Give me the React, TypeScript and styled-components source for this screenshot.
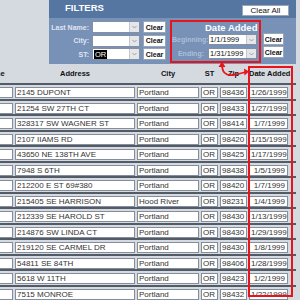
import React from 'react'
import styled, { createGlobalStyle } from 'styled-components'

const Global = createGlobalStyle`
  html, body { margin: 0; padding: 0; background: #d5dae1; }
`

const Page = styled.div`
  position: relative;
  width: 300px;
  height: 300px;
  overflow: hidden;
  background: #d5dae1;
  font-family: "Liberation Sans", Arial, sans-serif;
`
const Top = styled.div`
  display: flex;
  height: 64px;
`
const Panel = styled.div`
  margin-left: 49px;
  width: 247px;
  display: flex;
  flex-direction: column;
  background: #7891b7;
`
const PanelHead = styled.div`
  height: 18px;
  background: #5676a2;
  display: flex;
  align-items: flex-start;
  justify-content: space-between;
  padding: 0 7px 0 16px;
`
const PanelTitle = styled.div`
  color: #fff;
  font-weight: bold;
  font-size: 9.5px;
  line-height: 16px;
`
const Button = styled.div<{ $w: number; $h?: number }>`
  width: ${({ $w }) => $w}px;
  height: ${({ $h }) => $h || 12}px;
  box-sizing: border-box;
  background: #fff;
  border: 1px solid #9aa6b6;
  color: #111;
  font-size: 7px;
  font-weight: bold;
  display: flex;
  align-items: center;
  justify-content: center;
`
const ClearAll = styled(Button)`
  margin-top: 5px;
  font-size: 8px;
  font-weight: normal;
`
const PanelBody = styled.div`
  display: flex;
`
const FieldList = styled.div`
  display: flex;
  flex-direction: column;
  gap: 1.5px;
  padding-top: 3px;
`
const FieldRow = styled.div`
  display: grid;
  grid-template-columns: 40px 48px 23px;
  column-gap: 3px;
  align-items: center;
  height: 12px;
`
const Label = styled.div<{ $faded?: boolean }>`
  text-align: right;
  font-size: 7px;
  font-weight: bold;
  color: ${({ $faded }) => ($faded ? '#adbfd7' : '#dfe6f1')};
  white-space: nowrap;
`
const Select = styled.div<{ $h?: number }>`
  height: ${({ $h }) => $h || 12}px;
  box-sizing: border-box;
  background: #fff;
  border: 1px solid #8390a2;
  display: flex;
  align-items: center;
  font-size: 7.5px;
  color: #111;
`
const SelectText = styled.div`
  flex: 1;
  padding-left: 1px;
  white-space: nowrap;
  overflow: hidden;
`
const Picked = styled.span`
  background: #000;
  color: #fff;
  padding: 0 1px;
`
const Arrow = styled.div`
  width: 9px;
  height: 100%;
  background: #e4e6e9;
  border-left: 1px solid #c4c8ce;
  display: flex;
  align-items: center;
  justify-content: center;
`
const DateGroup = styled.div`
  display: flex;
  margin-left: 4px;
  margin-top: 2px;
`
const DateBox = styled.div`
  width: 91px;
  height: 43px;
  box-sizing: border-box;
  border: 2px solid #e8141b;
  display: flex;
  flex-direction: column;
`
const DateTitle = styled.div`
  color: #fff;
  font-weight: bold;
  font-size: 9.5px;
  line-height: 12px;
  padding-left: 33px;
`
const DateRows = styled.div`
  display: flex;
  flex-direction: column;
  gap: 3px;
`
const DateRow = styled.div`
  display: grid;
  grid-template-columns: 32px 49px;
  column-gap: 4px;
  align-items: center;
  height: 11px;
`
const ClearCol = styled.div`
  display: flex;
  flex-direction: column;
  gap: 1px;
  margin-left: 2px;
  padding-top: 13px;
`
const Table = styled.div`
  margin-left: -24px;
  width: 320px;
`
const Grid = styled.div`
  display: grid;
  grid-template-columns: 37px 120px 62px 17px 27px 39px;
  column-gap: 2px;
`
const HeadRow = styled(Grid)`
  height: 19px;
  align-items: center;
`
const HeadCell = styled.div`
  text-align: center;
  font-size: 7.5px;
  font-weight: bold;
  color: #111;
  white-space: nowrap;
`
const Row = styled(Grid)`
  height: 15.54px;
  box-sizing: border-box;
  border-top: 2px solid #535b67;
  padding-top: 2px;
  align-items: start;
`
const Cell = styled.div<{ $right?: boolean }>`
  height: 11px;
  box-sizing: border-box;
  background: #fff;
  border: 1px solid #838d9b;
  font-size: 8px;
  line-height: 9px;
  color: #333;
  padding: 0 2px 0 1px;
  white-space: nowrap;
  overflow: hidden;
  text-align: ${({ $right }) => ($right ? 'right' : 'left')};
`
const ColumnMark = styled.div`
  position: absolute;
  left: 248px;
  top: 66px;
  width: 45px;
  height: 231px;
  box-sizing: border-box;
  border: 2px solid #e8141b;
`
const Link = styled.svg`
  position: absolute;
  left: 212px;
  top: 58px;
`

const Chevron = () => (
  <svg width="5" height="4" viewBox="0 0 5 4">
    <path d="M0.5 1 L2.5 3 L4.5 1" fill="none" stroke="#8a8f96" strokeWidth="0.8" />
  </svg>
)

const rows = [
  ['2145 DUPONT', 'Portland', '98436', '1/26/1999'],
  ['21254 SW 27TH CT', 'Portland', '98433', '1/27/1999'],
  ['328317 SW WAGNER ST', 'Portland', '98414', '1/7/1999'],
  ['2107 IIAMS RD', 'Portland', '98420', '1/15/1999'],
  ['43650 NE 138TH AVE', 'Portland', '98425', '1/17/1999'],
  ['7948 S 6TH', 'Portland', '98438', '1/5/1999'],
  ['212200 E ST 69#380', 'Portland', '98420', '1/7/1999'],
  ['215405 SE HARRISON', 'Hood River', '98231', '1/4/1999'],
  ['212339 SE HAROLD ST', 'Portland', '98430', '1/13/1999'],
  ['214876 SW LINDA CT', 'Portland', '98430', '1/29/1999'],
  ['219120 SE CARMEL DR', 'Portland', '98430', '1/8/1999'],
  ['54811 SE 84TH', 'Portland', '98406', '1/28/1999'],
  ['5618 W 11TH', 'Portland', '98423', '1/2/1999'],
  ['7515 MONROE', 'Portland', '98432', '1/22/1999'],
]

const App = () => {
  return (
    <Page>
      <Global />
      <Top>
        <Panel>
          <PanelHead>
            <PanelTitle>FILTERS</PanelTitle>
            <ClearAll $w={47} $h={11}>Clear All</ClearAll>
          </PanelHead>
          <PanelBody>
            <FieldList>
              <FieldRow>
                <Label>Last Name:</Label>
                <Select><SelectText /><Arrow><Chevron /></Arrow></Select>
                <Button $w={23}>Clear</Button>
              </FieldRow>
              <FieldRow>
                <Label>City:</Label>
                <Select><SelectText /><Arrow><Chevron /></Arrow></Select>
                <Button $w={23}>Clear</Button>
              </FieldRow>
              <FieldRow>
                <Label>ST:</Label>
                <Select><SelectText><Picked>OR</Picked></SelectText><Arrow><Chevron /></Arrow></Select>
                <Button $w={23}>Clear</Button>
              </FieldRow>
            </FieldList>
            <DateGroup>
              <DateBox>
                <DateTitle>Date Added</DateTitle>
                <DateRows>
                  <DateRow>
                    <Label $faded>Beginning:</Label>
                    <Select $h={11}><SelectText>1/1/1999</SelectText><Arrow><Chevron /></Arrow></Select>
                  </DateRow>
                  <DateRow>
                    <Label $faded>Ending:</Label>
                    <Select $h={11}><SelectText>1/31/1999</SelectText><Arrow><Chevron /></Arrow></Select>
                  </DateRow>
                </DateRows>
              </DateBox>
              <ClearCol>
                <Button $w={21}>Clear</Button>
                <Button $w={21}>Clear</Button>
              </ClearCol>
            </DateGroup>
          </PanelBody>
        </Panel>
      </Top>
      <Table>
        <HeadRow>
          <HeadCell>Name</HeadCell>
          <HeadCell>Address</HeadCell>
          <HeadCell>City</HeadCell>
          <HeadCell>ST</HeadCell>
          <HeadCell>Zip</HeadCell>
          <HeadCell>Date Added</HeadCell>
        </HeadRow>
        {rows.map((r, i) => (
          <Row key={i}>
            <Cell />
            <Cell>{r[0]}</Cell>
            <Cell>{r[1]}</Cell>
            <Cell>OR</Cell>
            <Cell>{r[2]}</Cell>
            <Cell $right>{r[3]}</Cell>
          </Row>
        ))}
      </Table>
      <ColumnMark />
      <Link width="40" height="22" viewBox="0 0 40 22">
        <path d="M10 6 Q10 18 20 17 Q27 16 34 14" fill="none" stroke="#e8141b" strokeWidth="1.8" />
        <path d="M6.5 9 L10 3.5 L13.5 9 Z" fill="#e8141b" />
        <path d="M32 10.5 L37 13.5 L32.5 17.5 Z" fill="#e8141b" />
      </Link>
    </Page>
  )
}

export default App
